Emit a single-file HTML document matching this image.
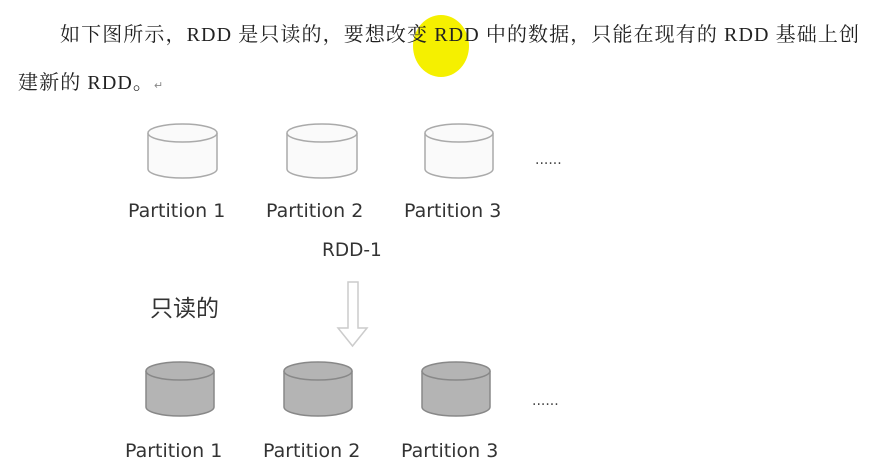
<!DOCTYPE html>
<html><head><meta charset="utf-8"><style>
body{margin:0;width:874px;height:462px;background:#fff;overflow:hidden;position:relative;font-family:"Liberation Serif","Noto Serif CJK SC",serif;color:#222}
.t{position:absolute;font-size:20px;white-space:nowrap;letter-spacing:1.1px}
.l{position:absolute;font-family:"DejaVu Sans","Liberation Sans",sans-serif;font-size:19px;color:#333;white-space:nowrap}
.d{position:absolute;font-family:"DejaVu Sans",sans-serif;font-size:14px;color:#444;letter-spacing:0px}
svg{position:absolute;left:0;top:0}
</style></head><body>
<svg width="874" height="462">
<ellipse cx="441" cy="46" rx="28" ry="31" fill="#f5f000"/>
<g stroke="#aaa" stroke-width="1.5" fill="#fafafa">
<path d="M148 133 v36 a34.5 9 0 0 0 69 0 v-36"/><ellipse cx="182.5" cy="133" rx="34.5" ry="9"/>
<path d="M287 133 v36 a35 9 0 0 0 70 0 v-36"/><ellipse cx="322" cy="133" rx="35" ry="9"/>
<path d="M425 133 v36 a34 9 0 0 0 68 0 v-36"/><ellipse cx="459" cy="133" rx="34" ry="9"/>
</g>
<g stroke="#888" stroke-width="1.5" fill="#b4b4b4">
<path d="M146 371 v36 a34 9 0 0 0 68 0 v-36"/><ellipse cx="180" cy="371" rx="34" ry="9"/>
<path d="M284 371 v36 a34 9 0 0 0 68 0 v-36"/><ellipse cx="318" cy="371" rx="34" ry="9"/>
<path d="M422 371 v36 a34 9 0 0 0 68 0 v-36"/><ellipse cx="456" cy="371" rx="34" ry="9"/>
</g>
<path d="M348 282 h10 v46 h9 l-14.5 18 l-14.5 -18 h10 z" fill="#fff" stroke="#ccc" stroke-width="1.5"/>
</svg>
<div class="t" style="left:60px;top:18px">如下图所示，RDD 是只读的，要想改变 RDD 中的数据，只能在现有的 RDD 基础上创</div>
<div class="t" style="left:18px;top:66px">建新的 RDD。<span style="font-size:11px;color:#888">↵</span></div>
<div class="l" style="left:128px;top:200px">Partition 1</div>
<div class="l" style="left:266px;top:200px">Partition 2</div>
<div class="l" style="left:404px;top:200px">Partition 3</div>
<div class="d" style="left:535px;top:152px">......</div>
<div class="l" style="left:322px;top:240px;font-size:18.5px">RDD-1</div>
<div class="l" style="left:150px;top:289px;font-size:23px;font-family:'Noto Sans CJK SC',sans-serif">只读的</div>
<div class="l" style="left:125px;top:440px">Partition 1</div>
<div class="l" style="left:263px;top:440px">Partition 2</div>
<div class="l" style="left:401px;top:440px">Partition 3</div>
<div class="d" style="left:532px;top:393px">......</div>
</body></html>
